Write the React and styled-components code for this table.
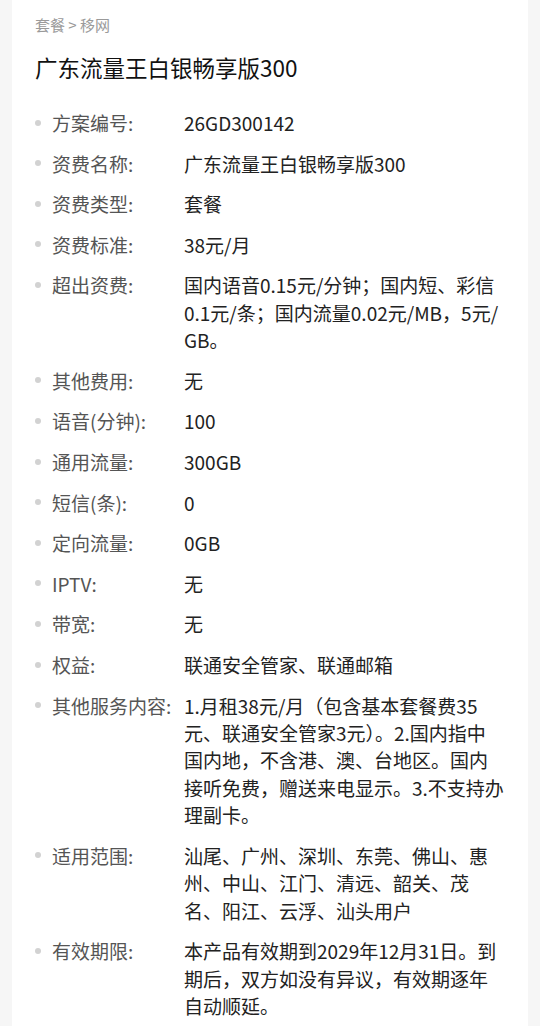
import React from 'react'
import styled, { createGlobalStyle } from 'styled-components'

const Global = createGlobalStyle`
  html, body { margin: 0; padding: 0; background: #f6f6f6; }
  body { font-family: "Noto Sans CJK SC", "Noto Sans", sans-serif; }
`

const Card = styled.div`
  background: #fff;
  margin: 0 12px;
  padding: 14px 22px 20px 23px;
`

const Crumb = styled.div`
  font-size: 15px;
  line-height: 22px;
  color: #9a9a9a;
`

const Title = styled.h1`
  margin: 16px 0 0;
  font-size: 22.5px;
  line-height: 30px;
  font-weight: 400;
  color: #111;
`

const List = styled.ul`
  list-style: none;
  margin: 27px 0 0;
  padding: 0;
  display: flex;
  flex-direction: column;
  gap: 13.2px;
`

const Row = styled.li`
  display: flex;
  align-items: flex-start;
  font-size: 19px;
  line-height: 27.4px;
`

const Dot = styled.span`
  flex: 0 0 6px;
  width: 6px;
  height: 6px;
  border-radius: 50%;
  background: #d2d2d2;
  margin-top: 10.7px;
  margin-right: 11px;
`

const Label = styled.span`
  flex: 0 0 132px;
  color: #555;
  white-space: nowrap;
`

const Value = styled.div`
  flex: 1;
  color: #222;
`

const Line = styled.div`
  white-space: nowrap;
`

const rows = [
  ['方案编号:', ['26GD300142']],
  ['资费名称:', ['广东流量王白银畅享版300']],
  ['资费类型:', ['套餐']],
  ['资费标准:', ['38元/月']],
  ['超出资费:', ['国内语音0.15元/分钟；国内短、彩信', '0.1元/条；国内流量0.02元/MB，5元/', 'GB。']],
  ['其他费用:', ['无']],
  ['语音(分钟):', ['100']],
  ['通用流量:', ['300GB']],
  ['短信(条):', ['0']],
  ['定向流量:', ['0GB']],
  ['IPTV:', ['无']],
  ['带宽:', ['无']],
  ['权益:', ['联通安全管家、联通邮箱']],
  ['其他服务内容:', ['1.月租38元/月（包含基本套餐费35', '元、联通安全管家3元）。2.国内指中', '国内地，不含港、澳、台地区。国内', '接听免费，赠送来电显示。3.不支持办', '理副卡。']],
  ['适用范围:', ['汕尾、广州、深圳、东莞、佛山、惠', '州、中山、江门、清远、韶关、茂', '名、阳江、云浮、汕头用户']],
  ['有效期限:', ['本产品有效期到2029年12月31日。到', '期后，双方如没有异议，有效期逐年', '自动顺延。']],
]

export default function App() {
  return (
    <>
      <Global />
      <Card>
        <Crumb>套餐 &gt; 移网</Crumb>
        <Title>广东流量王白银畅享版300</Title>
        <List>
          {rows.map(([label, lines]) => (
            <Row key={label}>
              <Dot />
              <Label>{label}</Label>
              <Value>
                {lines.map((l, i) => <Line key={i}>{l}</Line>)}
              </Value>
            </Row>
          ))}
        </List>
      </Card>
    </>
  )
}
